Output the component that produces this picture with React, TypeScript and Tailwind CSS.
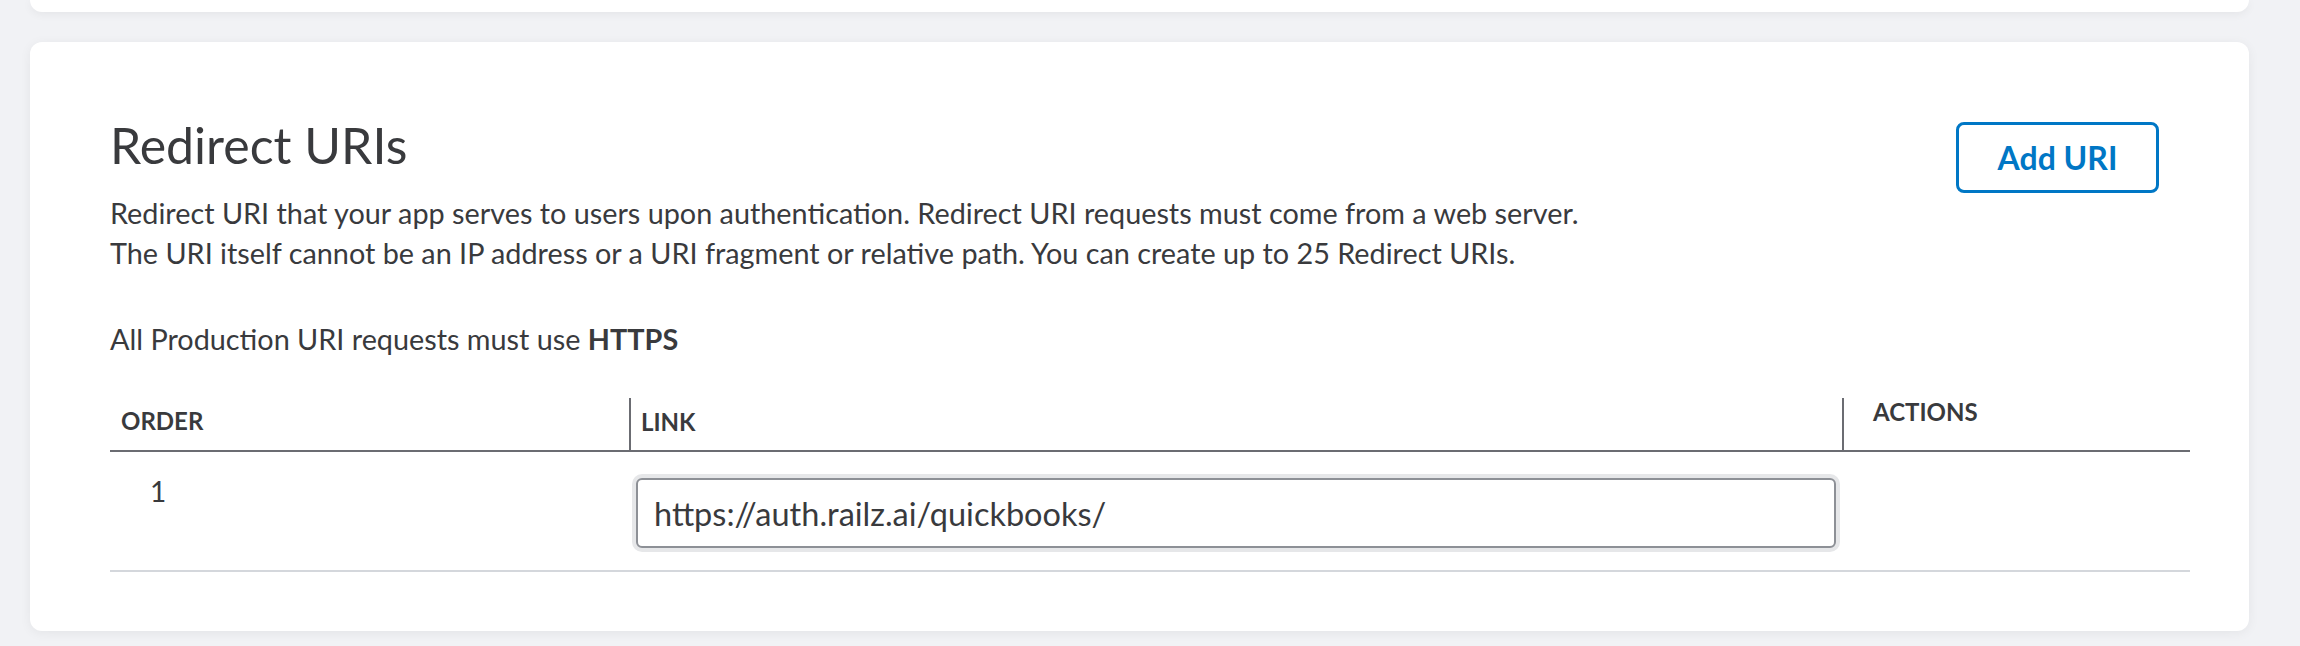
import React from 'react';

const uris = [{ order: 1, link: 'https://auth.railz.ai/quickbooks/' }];

const App = () => {
    return (
        <div className="min-h-[646px] bg-[#f1f2f5] pl-[30px] pr-[51px] font-['Lato','Open_Sans',sans-serif] text-[#393a3d]">
            {/* bottom of the previous card */}
            <div className="h-[12px] rounded-b-[12px] bg-white shadow-[0_2px_10px_rgba(0,0,0,0.06)]" />

            <section className="mt-[30px] rounded-[12px] bg-white pt-[73px] pb-[59px] pl-[80px] pr-[59px] shadow-[0_2px_12px_rgba(0,0,0,0.06)]">
                <div className="flex items-start justify-between">
                    <div>
                        <h2 className="text-[50px] leading-[60px] font-normal">Redirect URIs</h2>
                        <p className="mt-[18px] text-[28.8px] leading-[40px]">
                            Redirect URI that your app serves to users upon authentication. Redirect URI requests must come from a web server.
                            <br />
                            The URI itself cannot be an IP address or a URI fragment or relative path. You can create up to 25 Redirect URIs.
                        </p>
                        <p className="mt-[46px] text-[28.8px] leading-[40px]">
                            All Production URI requests must use <span className="font-bold">HTTPS</span>
                        </p>
                    </div>
                    <button className="mt-[7px] mr-[31px] h-[71px] w-[203px] rounded-[8px] border-[3px] border-[#0077c5] text-[32px] font-bold text-[#0077c5]">
                        Add URI
                    </button>
                </div>

                {/* Redirect URI table */}
                <div className="mt-[39px]">
                    <div className="flex border-b-2 border-[#6b6c72] text-[24px] leading-[28px] font-bold uppercase">
                        <div className="flex h-[51px] w-[519px] items-end pl-[11px] pb-[14px]">Order</div>
                        <div className="flex w-[1213px] items-end border-l-2 border-[#6b6c72] pl-[10px] pb-[14px]">Link</div>
                        <div className="flex flex-1 items-end border-l-2 border-[#6b6c72] pl-[29px] pb-[24px]">Actions</div>
                    </div>
                    {uris.map((u) => (
                        <div key={u.order} className="flex h-[120px] border-b-2 border-[#d4d7dc]">
                            <div className="w-[519px] pt-[19px] pl-[40px] text-[28px] leading-[40px]">{u.order}</div>
                            <div className="w-[1213px] pt-[22px] pl-[3px] pr-[2px]">
                                <div className="rounded-[10px] bg-[#e6e7e9] p-[4px]">
                                    <input
                                        readOnly
                                        value={u.link}
                                        className="block h-[70px] w-full rounded-[6px] border-2 border-[#8d9096] bg-white px-[16px] text-[32.5px] text-[#393a3d] outline-none"
                                    />
                                </div>
                            </div>
                            <div className="flex-1" />
                        </div>
                    ))}
                </div>
            </section>
        </div>
    );
};

export default App;
